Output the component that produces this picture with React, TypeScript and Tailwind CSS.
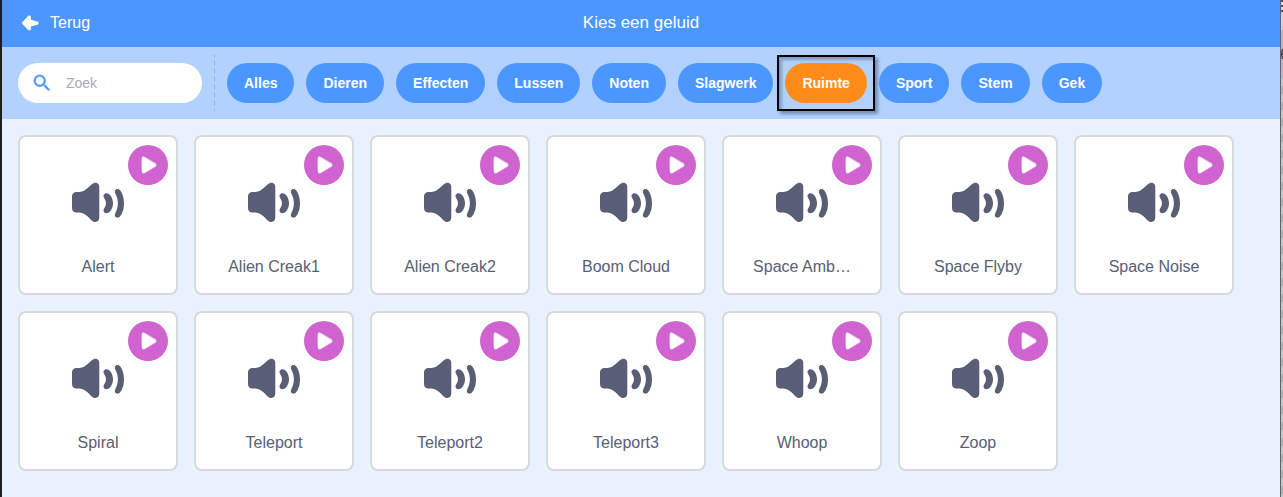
import React from "react";

const categories = ["Alles", "Dieren", "Effecten", "Lussen", "Noten", "Slagwerk", "Ruimte", "Sport", "Stem", "Gek"];

const sounds = [
  "Alert", "Alien Creak1", "Alien Creak2", "Boom Cloud", "Space Amb…", "Space Flyby", "Space Noise",
  "Spiral", "Teleport", "Teleport2", "Teleport3", "Whoop", "Zoop",
];

function BackArrow() {
  return (
    <svg width="18" height="16" viewBox="0 0 18 16" fill="#fff" aria-hidden="true">
      <path d="M1.200 7.300 7.200 1.100C8.300.1 9.900.7 9.900 2.200v2.500l6.400 1.700c1.900.5 1.900 2.900 0 3.400L9.900 11.400V13.800c0 1.500-1.600 2.100-2.700 1.100L1.200 8.800c-.5-.5-.5-1 0-1.500z" />
    </svg>
  );
}

function SearchIcon() {
  return (
    <svg width="22" height="22" viewBox="0 0 24 24" fill="#4c97ff" stroke="#4c97ff" strokeWidth="0.4" aria-hidden="true">
      <path d="M15.5 14h-.79l-.28-.27A6.47 6.47 0 0 0 16 9.5 6.5 6.5 0 1 0 9.5 16c1.61 0 3.09-.59 4.23-1.57l.27.28v.79l5 4.99L20.49 19l-4.99-5zm-6 0a4.5 4.5 0 1 1 0-9 4.5 4.5 0 0 1 0 9z" />
    </svg>
  );
}

function Speaker() {
  return (
    <svg width="52" height="41" viewBox="0 0 52 41" fill="#575e75" aria-hidden="true">
      <path d="M0 14.500C0 11.500 1.800 10 4.600 10H7c5.500 0 9-4.300 12.500-7.400C21 1.300 22 .8 23.400.8c2.400 0 3.900 1.600 3.900 4.400v30.400c0 2.800-1.500 4.400-3.900 4.400-1.400 0-2.400-.5-3.900-1.800C16 35.100 12.500 30.600 7 30.600H4.600C1.800 30.600 0 29.100 0 26.100z" />
      <path d="M32.400 16.400C30.500 13.600 32 11.200 34.600 11.200c3.100 0 6.400 4.900 6.400 10s-3.300 10-6.400 10c-2.600 0-4.100-2.400-2.200-5.200 2.200-3.300 2.200-6.300 0-9.600z" />
      <path d="M43.300 11.400C42 8.800 43.600 7 45.700 7c3.300 0 6.300 7.200 6.300 14.300S49 35.700 45.700 35.700c-2.100 0-3.700-1.800-2.400-4.400 3.500-7 3.500-12.900 0-19.900z" />
    </svg>
  );
}

function SoundCard({ name }: { name: string }) {
  return (
    <li className="relative flex h-40 w-40 flex-col items-center rounded-lg border-2 border-[#d9d9d9] bg-white pt-[45px]">
      <Speaker />
      <span className="mt-8 text-base leading-6 text-[#575e75]">{name}</span>
      <button
        type="button"
        aria-label={name}
        className="absolute top-2 right-2 flex h-10 w-10 items-center justify-center rounded-full bg-[#cf63cf]"
      >
        <svg width="40" height="40" viewBox="0 0 40 40" aria-hidden="true">
          <path
            d="M15.500 13.400v13.200L26.600 20z"
            fill="#fff"
            stroke="#e2a0e8"
            strokeWidth="4.400"
            strokeLinejoin="round"
          />
          <path d="M15.500 13.400v13.200L26.600 20z" fill="#fff" stroke="#fff" strokeWidth="3" strokeLinejoin="round" />
        </svg>
      </button>
    </li>
  );
}

export default function App() {
  return (
    <div className="flex min-h-screen border-l-2 border-[#1e1e1e] bg-[#e9f1fc] font-['Liberation_Sans',Arial,sans-serif]">
      <div className="min-w-0 flex-1">
        <header className="grid h-[47px] grid-cols-[1fr_auto_1fr] items-center bg-[#4c97ff] text-white">
          <button type="button" className="flex items-center gap-[11px] justify-self-start pb-0.5 pl-[19px] text-base">
            <BackArrow />
            Terug
          </button>
          <h1 className="pb-0.5 text-[17px]">Kies een geluid</h1>
        </header>

        <div className="flex h-[72px] items-center bg-[#b2d1ff] pl-4">
          <label className="flex h-10 w-[184px] shrink-0 items-center gap-[13px] rounded-full bg-white pl-[13px]">
            <SearchIcon />
            <input
              type="text"
              placeholder="Zoek"
              aria-label="Zoek"
              className="w-28 bg-transparent text-sm text-[#575e75] outline-none placeholder:text-[#a9abb3]"
            />
          </label>
          <div className="mx-3 h-14 w-px shrink-0 bg-[repeating-linear-gradient(to_bottom,#8fafdc_0_2px,transparent_2px_6px,#8fafdc_6px_8px)]" />
          <nav className="flex gap-3">
            {categories.map((c) => (
              <div key={c} className="relative shrink-0">
                <button
                  type="button"
                  className={
                    c === "Ruimte"
                      ? "h-10 rounded-full bg-[#ff8c1a] px-[17px] text-sm font-bold text-white"
                      : "h-10 rounded-full bg-[#4c97ff] px-[17px] text-sm font-bold text-white"
                  }
                >
                  {c}
                </button>
                {c === "Ruimte" && (
                  <div className="pointer-events-none absolute -inset-2 border-2 border-black shadow-[3px_3px_3px_rgba(60,80,110,0.5),inset_3px_3px_3px_rgba(60,80,110,0.4)]" />
                )}
              </div>
            ))}
          </nav>
        </div>

        <ul className="flex flex-wrap gap-4 p-4">
          {sounds.map((s) => (
            <SoundCard key={s} name={s} />
          ))}
        </ul>
      </div>
      <div className="w-[3px] shrink-0 border-l border-[#5d6670] bg-[repeating-linear-gradient(to_bottom,#c6c9ca_0_6px,#adb1b2_6px_14px,#c6c9ca_14px_16px)]">
        <div className="h-[30px] bg-[linear-gradient(to_bottom,#555_0_2px,#d5d3d3_2px_5px,#555_5px_7px,#d5d3d3_7px_10px,#555_10px_12px,#d5d3d3_12px)]" />
        <div className="h-12 bg-[#bcbaba] pt-[18px]">
          <svg width="2" height="12" viewBox="0 0 2 12" fill="none" stroke="#444" strokeWidth="1.5" aria-hidden="true">
            <path d="M2 1C.3 2.500.3 9.500 2 11M0 6h2" />
          </svg>
        </div>
      </div>
    </div>
  );
}
